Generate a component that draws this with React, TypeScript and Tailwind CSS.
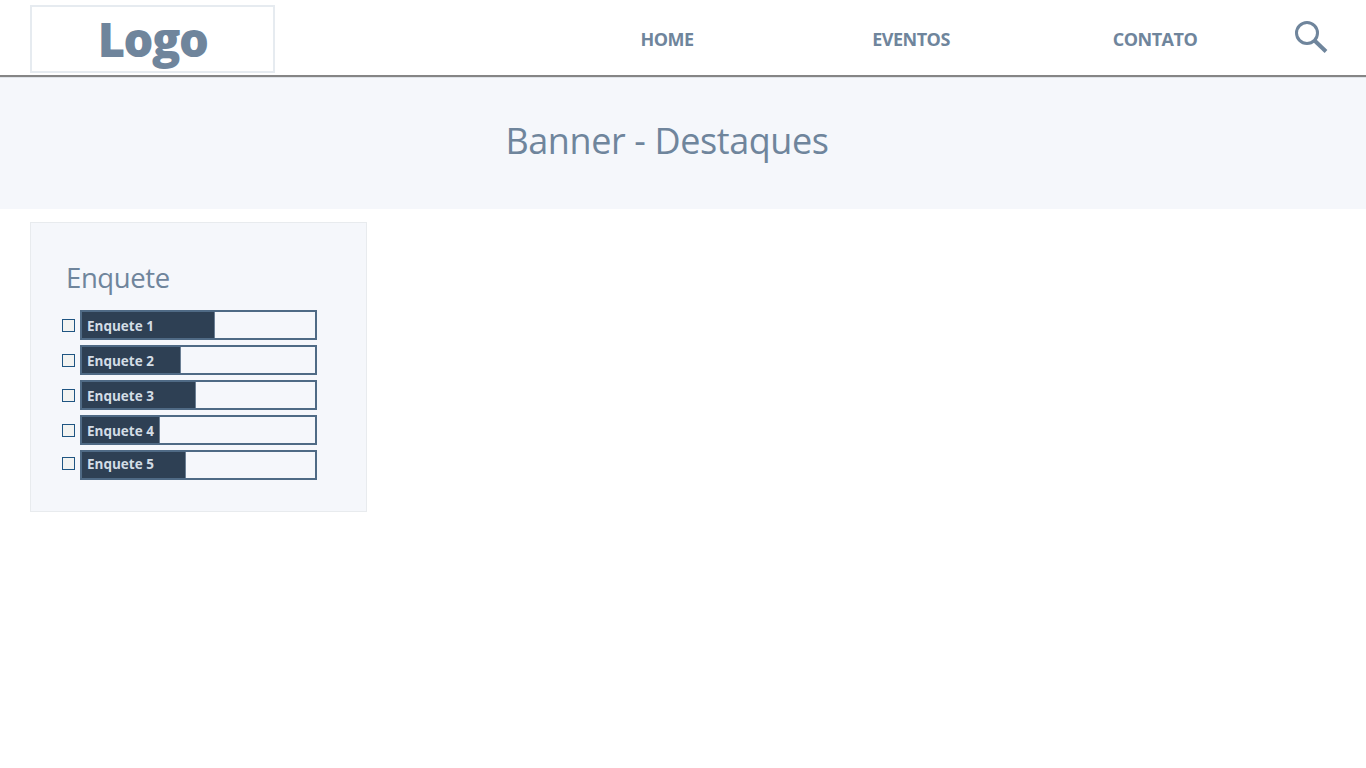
import React from 'react';

const POLLS = [
  { label: 'Enquete 1', fill: 133 },
  { label: 'Enquete 2', fill: 99 },
  { label: 'Enquete 3', fill: 114 },
  { label: 'Enquete 4', fill: 78 },
  { label: 'Enquete 5', fill: 104 },
];

const NAV = ['HOME', 'EVENTOS', 'CONTATO'];

function PollRow({ label, fill, last }: { label: string; fill: number; last: boolean }) {
  return (
    <div className="flex items-start h-[30px]">
      <span
        className={`w-[13px] h-[13px] mr-[5px] border border-[#1f5582] bg-[#f2f3f1] ${last ? 'mt-[7px]' : 'mt-[9px]'}`}
      />
      <div className="w-[237px] h-[30px] border-2 border-[#4f6a85]">
        <div
          className={`h-full bg-[#2e4054] border-r border-[#6b7f94] pl-[5px] text-[13.5px] font-bold text-[#d3dde6] whitespace-nowrap ${last ? 'leading-[24px]' : 'leading-[28px]'}`}
          style={{ width: fill }}
        >
          {label}
        </div>
      </div>
    </div>
  );
}

export default function App() {
  return (
    <div className="min-h-[768px] bg-white font-['Open_Sans','Noto_Sans',sans-serif]">
      <header className="h-[77px] flex items-start border-b-2 border-[#858585] bg-white">
        <div className="ml-[30px] mt-[5px] w-[245px] h-[68px] border-2 border-[#e6ebf0] flex items-center justify-center text-[47px] leading-none font-extrabold text-[#6f859c] tracking-[-1.5px]">
          Logo
        </div>
        <nav className="ml-[270px] mt-[26px] flex items-center">
          {NAV.map((item) => (
            <a
              key={item}
              className="w-[244px] text-center text-[18px] leading-[26px] font-bold text-[#6f859c] tracking-[-0.5px]"
            >
              {item}
            </a>
          ))}
        </nav>
        <svg className="ml-[17px] mt-[20px]" width="34" height="34" viewBox="0 0 34 34" fill="none" stroke="#6f859c">
          <circle cx="13" cy="13" r="10.5" strokeWidth="3" />
          <path d="M20.5 20.5 L32 31.5" strokeWidth="4" />
        </svg>
      </header>
      <section className="h-[132px] bg-[#f5f7fb] border-t border-[#dfe3e8] flex items-center justify-center pb-[6px] text-[36px] text-[#6f859c] tracking-[-0.4px]">
        <span className="mr-[32px]">Banner - Destaques</span>
      </section>
      <aside className="ml-[30px] mt-[13px] w-[337px] h-[290px] bg-[#f5f7fb] border border-[#e8ebee] pl-[31px] pt-[36px]">
        <h2 className="ml-[4px] text-[27.5px] leading-[38px] text-[#6f859c] tracking-[-0.4px]">Enquete</h2>
        <div className="mt-[13px] flex flex-col gap-[5px]">
          {POLLS.map((poll, i) => (
            <PollRow key={poll.label} label={poll.label} fill={poll.fill} last={i === POLLS.length - 1} />
          ))}
        </div>
      </aside>
    </div>
  );
}
